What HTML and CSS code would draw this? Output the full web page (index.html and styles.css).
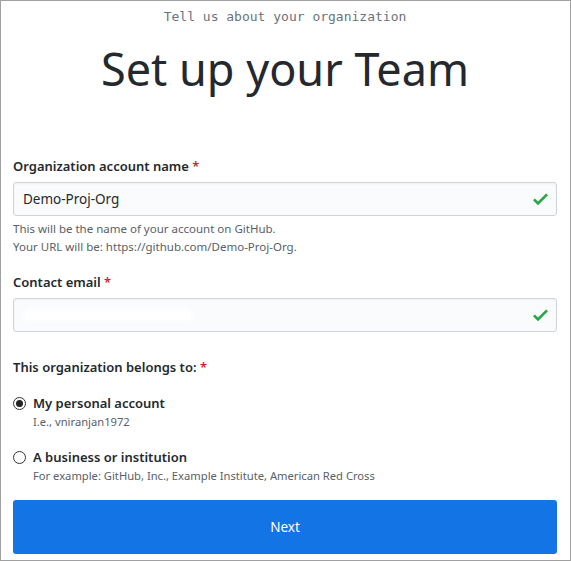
FILE: index.html
```html
<!DOCTYPE html>
<html lang="en">
<head>
<meta charset="utf-8">
<title>Set up your Team</title>
<link rel="stylesheet" href="styles.css">
</head>
<body>
<div class="frame">
  <p class="eyebrow">Tell us about your organization</p>
  <h1 class="title">Set up your Team</h1>

  <div class="field field-name">
    <label class="label">Organization account name <span class="req">*</span></label>
    <div class="input">
      <span class="value">Demo-Proj-Org</span>
      <svg class="check" viewBox="0 0 12 16" width="15" height="20"><path d="M12 5l-8 8-4-4 1.5-1.5L4 10l6.5-6.5L12 5z"/></svg>
    </div>
    <p class="note">This will be the name of your account on GitHub.<br>Your URL will be: https://github.com/Demo-Proj-Org.</p>
  </div>

  <div class="field field-email">
    <label class="label">Contact email <span class="req">*</span></label>
    <div class="input">
      <span class="value"><span class="redacted"></span></span>
      <svg class="check" viewBox="0 0 12 16" width="15" height="20"><path d="M12 5l-8 8-4-4 1.5-1.5L4 10l6.5-6.5L12 5z"/></svg>
    </div>
  </div>

  <div class="field field-belongs">
    <label class="label">This organization belongs to: <span class="req">*</span></label>
    <div class="option">
      <span class="radio checked"></span>
      <div class="option-text">
        <div class="option-title">My personal account</div>
        <div class="option-sub">I.e., vniranjan1972</div>
      </div>
    </div>
    <div class="option">
      <span class="radio"></span>
      <div class="option-text">
        <div class="option-title">A business or institution</div>
        <div class="option-sub">For example: GitHub, Inc., Example Institute, American Red Cross</div>
      </div>
    </div>
  </div>

  <button class="next" type="button">Next</button>
</div>
</body>
</html>
```
FILE: styles.css
```css
html, body {
  margin: 0;
  padding: 0;
  background: #ffffff;
}
.frame {
  box-sizing: border-box;
  width: 571px;
  height: 561px;
  border: 1px solid #a0a0a0;
  padding: 0 13px 0 12px;
  font-family: "Noto Sans", "Open Sans", sans-serif;
  color: #24292e;
  display: flex;
  flex-direction: column;
}
.eyebrow {
  margin: 6px 0 0;
  font-family: "DejaVu Sans Mono", "Liberation Mono", monospace;
  font-size: 13px;
  line-height: 20px;
  color: #6a737d;
  text-align: center;
}
.title {
  margin: 12px 0 0;
  font-size: 45px;
  font-weight: 400;
  line-height: 60px;
  text-align: center;
  color: #24292e;
}
.field-name { margin-top: 57px; }
.field-email { margin-top: 16px; }
.field-belongs { margin-top: 25px; }
.label {
  display: block;
  font-size: 13px;
  font-weight: 600;
  line-height: 20px;
  margin-bottom: 6px;
}
.req { color: #cb2431; }
.input {
  box-sizing: border-box;
  height: 34px;
  border: 1px solid #d1d5da;
  border-radius: 3px;
  background: #fafbfc;
  display: flex;
  align-items: center;
  padding: 0 8px 0 9px;
  box-shadow: inset 0 1px 2px rgba(27,31,35,0.05);
}
.value {
  flex: 1;
  display: flex;
  align-items: center;
  font-size: 13.5px;
  color: #24292e;
}
.redacted {
  display: block;
  width: 170px;
  height: 12px;
  background: #ffffff;
  border-radius: 6px;
  filter: blur(2px);
}
.check { fill: #28a745; display: block; flex: none; }
.note {
  margin: 4px 0 0;
  font-size: 11.5px;
  line-height: 18px;
  color: #586069;
}
.option {
  display: flex;
  align-items: flex-start;
  margin-top: 16px;
}
.option + .option { margin-top: 16px; }
.radio {
  box-sizing: border-box;
  width: 13px;
  height: 13px;
  border: 1px solid #333;
  border-radius: 50%;
  margin: 4px 7px 0 0;
  position: relative;
  flex: none;
}
.radio.checked::after {
  content: "";
  position: absolute;
  left: 2px;
  top: 2px;
  width: 7px;
  height: 7px;
  border-radius: 50%;
  background: #222;
}
.option-title {
  font-size: 13px;
  font-weight: 600;
  line-height: 20px;
}
.option-sub {
  font-size: 11.2px;
  line-height: 18px;
  color: #586069;
}
.next {
  margin-top: 15px;
  height: 54px;
  width: 100%;
  border: 0;
  border-radius: 3px;
  background: #1374e5;
  color: #ffffff;
  font-family: "Noto Sans", "Open Sans", sans-serif;
  font-size: 13.5px;
}
```
